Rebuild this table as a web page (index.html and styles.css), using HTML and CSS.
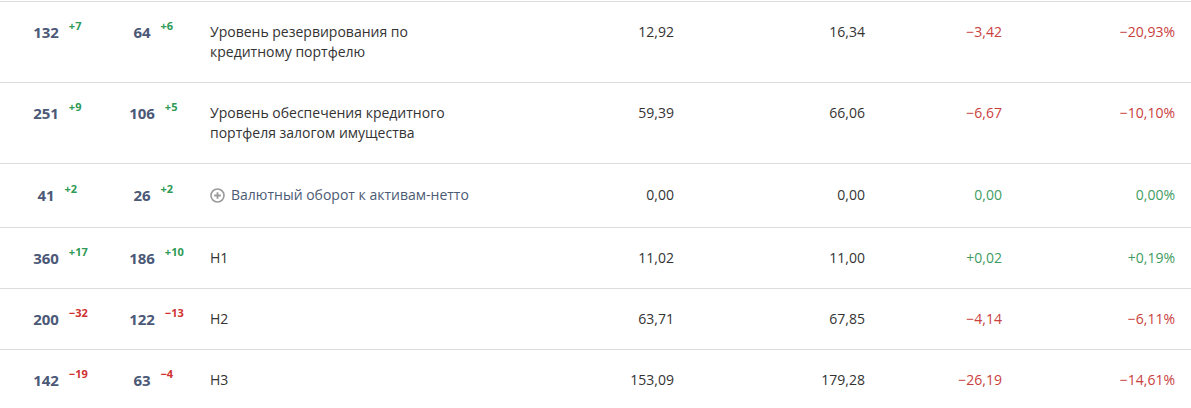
FILE: index.html
```html
<!DOCTYPE html>
<html lang="ru">
<head>
<meta charset="utf-8">
<link rel="stylesheet" href="styles.css">
</head>
<body>
<div class="table">
  <div class="row">
    <div class="rank"><span class="num">132<sup class="up">+7</sup></span></div>
    <div class="rank"><span class="num">64<sup class="up">+6</sup></span></div>
    <div class="label">Уровень резервирования по кредитному портфелю</div>
    <div class="val">12,92</div>
    <div class="val">16,34</div>
    <div class="val neg">−3,42</div>
    <div class="val neg">−20,93%</div>
  </div>
  <div class="row">
    <div class="rank"><span class="num">251<sup class="up">+9</sup></span></div>
    <div class="rank"><span class="num">106<sup class="up">+5</sup></span></div>
    <div class="label">Уровень обеспечения кредитного портфеля залогом имущества</div>
    <div class="val">59,39</div>
    <div class="val">66,06</div>
    <div class="val neg">−6,67</div>
    <div class="val neg">−10,10%</div>
  </div>
  <div class="row row-icon">
    <div class="rank"><span class="num">41<sup class="up">+2</sup></span></div>
    <div class="rank"><span class="num">26<sup class="up">+2</sup></span></div>
    <div class="label label-icon"><svg class="plus" width="15" height="15" viewBox="0 0 15 15"><circle cx="7.5" cy="7.5" r="6.5" fill="none" stroke="#9a9a9a" stroke-width="1.6"/><path d="M7.5 4.2v6.6M4.2 7.5h6.6" stroke="#9a9a9a" stroke-width="1.8"/></svg><span class="link">Валютный оборот к активам-нетто</span></div>
    <div class="val">0,00</div>
    <div class="val">0,00</div>
    <div class="val pos">0,00</div>
    <div class="val pos">0,00%</div>
  </div>
  <div class="row">
    <div class="rank"><span class="num">360<sup class="up">+17</sup></span></div>
    <div class="rank"><span class="num">186<sup class="up">+10</sup></span></div>
    <div class="label">Н1</div>
    <div class="val">11,02</div>
    <div class="val">11,00</div>
    <div class="val pos">+0,02</div>
    <div class="val pos">+0,19%</div>
  </div>
  <div class="row">
    <div class="rank"><span class="num">200<sup class="down">−32</sup></span></div>
    <div class="rank"><span class="num">122<sup class="down">−13</sup></span></div>
    <div class="label">Н2</div>
    <div class="val">63,71</div>
    <div class="val">67,85</div>
    <div class="val neg">−4,14</div>
    <div class="val neg">−6,11%</div>
  </div>
  <div class="row">
    <div class="rank"><span class="num">142<sup class="down">−19</sup></span></div>
    <div class="rank"><span class="num">63<sup class="down">−4</sup></span></div>
    <div class="label">Н3</div>
    <div class="val">153,09</div>
    <div class="val">179,28</div>
    <div class="val neg">−26,19</div>
    <div class="val neg">−14,61%</div>
  </div>
</div>
</body>
</html>
```
FILE: styles.css
```css
html, body {
  margin: 0;
  padding: 0;
  background: #fff;
}
body {
  font-family: "Open Sans", "Liberation Sans", Arial, sans-serif;
  font-size: 14px;
  color: #333;
}
.table {
  padding-top: 1px;
}
.row {
  display: grid;
  grid-template-columns: 92px 100px 318px 164px 191px 137px 173px;
  padding: 20px 16px 20px 0;
  border-top: 1px solid #dcdcdc;
  line-height: 20px;
  align-items: start;
}
.row-icon {
  padding-top: 21px;
  padding-bottom: 22px;
}
.rank {
  text-align: center;
  font-size: 15px;
  height: 20px;
}
.num {
  position: relative;
  font-weight: bold;
  font-size: 15px;
  color: #4b5977;
}
.num sup {
  position: absolute;
  left: 100%;
  top: -2px;
  margin-left: 10px;
  font-size: 11px;
  font-weight: bold;
  line-height: 12px;
}
.up { color: #2e9a55; }
.down { color: #cf3230; }
.label {
  padding-left: 18px;
  max-width: 268px;
}
.label-icon {
  display: flex;
  align-items: center;
  gap: 6px;
  white-space: nowrap;
}
.plus {
  flex: none;
}
.link {
  color: #4c5b74;
}
.val {
  text-align: right;
}
.neg { color: #c9403e; }
.pos { color: #3f9b62; }
```
